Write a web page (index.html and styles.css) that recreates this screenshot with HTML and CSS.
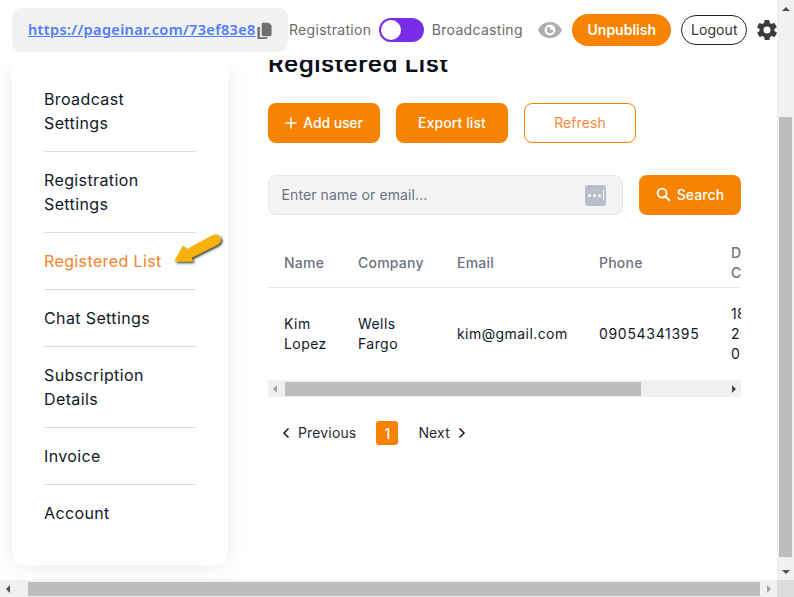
FILE: index.html
```html
<!DOCTYPE html>
<html lang="en">
<head>
<meta charset="utf-8">
<title>Registered List</title>
<link rel="stylesheet" href="styles.css">
</head>
<body>
<div class="window">
  <div class="page">
    <header class="topbar">
      <div class="urlbox">
        <a class="url" href="#">https://pageinar.com/73ef83e8</a>
        <svg class="copy" viewBox="0 0 24 24" width="17" height="17"><path d="M10 1h8l4 4v13a2 2 0 0 1-2 2h-10a2 2 0 0 1-2-2V3a2 2 0 0 1 2-2z" fill="#6f6f6f"/><path d="M2 7h3.500v14.500h10.500V24H2z" fill="#6f6f6f"/></svg>
      </div>
      <span class="modelabel">Registration</span>
      <span class="toggle"><span class="knob"></span></span>
      <span class="modelabel">Broadcasting</span>
      <svg class="eye" viewBox="0 0 24 24" width="26" height="26"><path fill-rule="evenodd" d="M12 4.500C7 4.500 2.700 7.600 1 12c1.700 4.400 6 7.500 11 7.500s9.300-3.100 11-7.500c-1.700-4.400-6-7.500-11-7.500zm0 12.500a5 5 0 1 1 0-10 5 5 0 0 1 0 10z" fill="#aeaeae"/><path fill-rule="evenodd" d="M12 9a3 3 0 1 0 3 3h-2.500a.5.5 0 0 1-.5-.5z" fill="#aeaeae"/></svg>
      <button class="pill">Unpublish</button>
      <button class="logout">Logout</button>
      <svg class="gear" viewBox="0 0 24 24" width="24" height="24"><path fill-rule="evenodd" d="M19.400 13a7.500 7.500 0 0 0 0-2l2.100-1.600a.5.5 0 0 0 .1-.6l-2-3.500a.5.5 0 0 0-.6-.2l-2.500 1a7.500 7.500 0 0 0-1.700-1l-.4-2.700a.5.5 0 0 0-.5-.4h-4a.5.5 0 0 0-.5.400l-.4 2.700a7.500 7.500 0 0 0-1.700 1l-2.500-1a.5.5 0 0 0-.6.2l-2 3.500a.5.5 0 0 0 .1.6L4.600 11a7.500 7.500 0 0 0 0 2l-2.100 1.600a.5.5 0 0 0-.1.6l2 3.500a.5.5 0 0 0 .6.2l2.500-1a7.500 7.500 0 0 0 1.700 1l.4 2.700a.5.5 0 0 0 .5.4h4a.5.5 0 0 0 .5-.4l.4-2.700a7.500 7.500 0 0 0 1.700-1l2.500 1a.5.5 0 0 0 .6-.2l2-3.500a.5.5 0 0 0-.1-.6zM12 15.500a3.500 3.500 0 1 1 0-7 3.500 3.500 0 0 1 0 7z" fill="#3c3c3c"/></svg>
    </header>
    <div class="body">
      <aside class="sidebar">
        <nav class="menu">
          <a class="item">Broadcast<br>Settings</a>
          <a class="item">Registration<br>Settings</a>
          <a class="item active">Registered List</a>
          <a class="item">Chat Settings</a>
          <a class="item">Subscription<br>Details</a>
          <a class="item">Invoice</a>
          <a class="item">Account</a>
        </nav>
        <svg class="arrow" viewBox="0 0 56 40" width="56" height="40"><defs><filter id="s" x="-20%" y="-20%" width="150%" height="150%"><feDropShadow dx="1.500" dy="1.500" stdDeviation="1" flood-color="#000" flood-opacity=".8"/></filter></defs><path d="M5 29 L13 14 L16 18 L43.500 3.200 Q47 2 49.500 4.600 Q52 9.500 48 12 L21 25.500 L22.500 29 Z" fill="#f9b208" stroke="#f9b208" stroke-width="1" stroke-linejoin="round" filter="url(#s)"/></svg>
      </aside>
      <main class="main">
        <h1 class="title">Registered List</h1>
        <div class="actions">
          <button class="btn solid add"><svg viewBox="0 0 12 12" width="12" height="12"><path d="M6 .5v11M.5 6h11" stroke="#fff" stroke-width="1.500" fill="none"/></svg>Add user</button>
          <button class="btn solid">Export list</button>
          <button class="btn outline">Refresh</button>
        </div>
        <div class="searchrow">
          <div class="field">
            <span class="placeholder">Enter name or email...</span>
            <span class="dots"><i></i><i></i><i></i><b></b></span>
          </div>
          <button class="btn solid search"><svg viewBox="0 0 16 16" width="15" height="15"><circle cx="6.500" cy="6.500" r="4.800" stroke="#fff" stroke-width="2" fill="none"/><path d="M10 10l4.800 4.800" stroke="#fff" stroke-width="2.200" fill="none"/></svg>Search</button>
        </div>
        <div class="tablewrap">
          <div class="tableclip">
            <table class="table">
              <thead>
                <tr><th class="c1">Name</th><th class="c2">Company</th><th class="c3">Email</th><th class="c4">Phone</th><th class="c5">Date<br>Created</th></tr>
              </thead>
              <tbody>
                <tr><td>Kim<br>Lopez</td><td>Wells<br>Fargo</td><td>kim@gmail.com</td><td class="phone">09054341395</td><td>18<br>20<br>01</td></tr>
              </tbody>
            </table>
          </div>
          <div class="hbar inner">
            <span class="tri left dim"></span>
            <span class="thumb"></span>
            <span class="tri right"></span>
          </div>
        </div>
        <div class="pager">
          <svg viewBox="0 0 8 12" width="8" height="12"><path d="M6.500 1.500 2 6l4.500 4.500" stroke="#111827" stroke-width="1.500" fill="none"/></svg>
          <span class="prev">Previous</span>
          <span class="page1">1</span>
          <span class="next">Next</span>
          <svg viewBox="0 0 8 12" width="8" height="12"><path d="M1.500 1.500 6 6l-4.500 4.500" stroke="#111827" stroke-width="1.500" fill="none"/></svg>
        </div>
      </main>
    </div>
  </div>
  <div class="vbar">
    <span class="tri up"></span>
    <span class="vtrack"><span class="vthumb"></span></span>
    <span class="tri down"></span>
  </div>
  <div class="hbar outer">
    <span class="tri left"></span>
    <span class="othumb"></span>
    <span class="tri right dim"></span>
  </div>
  <div class="corner"></div>
</div>
</body>
</html>
```
FILE: styles.css
```css
* { box-sizing: border-box; }
html, body { margin: 0; padding: 0; height: 100%; overflow: hidden; background: #fff; }
body { font-family: Inter, "Liberation Sans", sans-serif; color: #111827; }
button { font-family: inherit; border: 0; padding: 0; cursor: pointer; }

.window { display: grid; grid-template-columns: 777px 17px; grid-template-rows: 580px 17px; width: 794px; height: 597px; }
.page { display: flex; flex-direction: column; overflow: hidden; min-width: 0; }

.topbar { flex: none; height: 60px; background: #fff; display: flex; align-items: center; position: relative; z-index: 2; padding-left: 12px; }
.urlbox { flex: none; width: 276px; height: 44px; background: #f1f1f1; border-radius: 9px; display: flex; align-items: center; padding-left: 16px; }
.url { color: #4f7cf7; font-family: "Noto Sans", sans-serif; font-size: 14.500px; font-weight: 600; text-decoration: underline; letter-spacing: .35px; white-space: nowrap; flex: none; padding-bottom: 2px; }
.copy { flex: none; margin-left: 0; }
.modelabel { font-size: 14px; color: #6b6b6b; letter-spacing: .3px; padding-bottom: 2px; }
.urlbox + .modelabel { margin-left: 1px; }
.toggle { width: 45px; height: 24px; border-radius: 12px; background: #7a2de8; margin: 0 8px 0 7.500px; display: flex; align-items: center; padding-left: 2px; flex: none; }
.knob { width: 20px; height: 20px; background: #fff; border-radius: 50%; }
.eye { margin-left: 14.500px; flex: none; }
.pill { margin-left: 9px; width: 99px; height: 32px; border-radius: 16px; background: #f78300; color: #fff; font-weight: 600; font-size: 14px; flex: none; padding-bottom: 1px; }
.logout { margin-left: 10px; width: 66px; height: 30px; border-radius: 15px; background: #fff; border: 1px solid #222; color: #333; font-size: 14px; letter-spacing: .1px; flex: none; padding-bottom: 1px; }
.gear { margin-left: 8px; flex: none; }

.body { flex: 1; display: flex; min-height: 0; overflow: hidden; padding-left: 12px; padding-bottom: 15px; }
.sidebar { flex: none; width: 216px; background: #fff; border-radius: 0 0 12px 12px; box-shadow: 0 4px 24px rgba(0,0,0,.07); padding: 0 32px; position: relative; }
.menu { display: flex; flex-direction: column; padding-top: 27px; }
.item { display: block; padding: 0 0 16px; margin-bottom: 16px; border-bottom: 1px solid #dcdcdc; font-size: 16px; line-height: 24px; color: #111827; letter-spacing: .38px; }
.item:last-child { border-bottom: 0; }
.active { color: #f97f2a; }
.arrow { position: absolute; left: 158px; top: 172px; }

.main { flex: none; width: 473px; margin-left: 40px; }
.title { margin: -9px 0 0; font-size: 24px; line-height: 26px; font-weight: 600; color: #0b0f1a; letter-spacing: .55px; }
.actions { display: flex; gap: 16px; margin-top: 26px; }
.btn { height: 40px; width: 112px; border-radius: 8px; font-size: 14px; font-weight: 500; letter-spacing: .1px; display: inline-flex; align-items: center; justify-content: center; gap: 6px; padding-bottom: 1px; }
.solid { background: #f78300; color: #fff; }
.add { letter-spacing: -.12px; }
.outline { background: #fff; border: 1px solid #f78300; color: #f98a3c; font-weight: 400; }
.searchrow { display: flex; gap: 16px; margin-top: 32px; }
.field { width: 355px; height: 40px; background: #f3f4f6; border: 1px solid #e5e7eb; border-radius: 8px; display: flex; align-items: center; justify-content: space-between; padding: 0 16px 0 12.500px; }
.placeholder { font-size: 14px; color: #6b7280; letter-spacing: .1px; padding-bottom: 1px; }
.dots { width: 21px; height: 21px; background: #b8bfca; border-radius: 3px; display: flex; align-items: center; justify-content: center; gap: 2px; }
.dots i { width: 3px; height: 3px; background: #fff; border-radius: 50%; }
.dots b { width: 1px; height: 10px; background: #fff; }
.search { width: 102px; }

.tablewrap { margin-top: 16px; }
.tableclip { overflow: hidden; }
.table { border-collapse: collapse; width: 561px; font-size: 14px; table-layout: fixed; }
.table th { height: 56px; text-align: left; font-weight: 500; color: #6b7280; line-height: 20px; padding: 8px 16px 0; letter-spacing: .22px; border-bottom: 1px solid #e5e7eb; }
.table td { height: 92px; padding: 2px 16px 0; line-height: 20px; color: #111827; letter-spacing: .43px; }
.table .phone { letter-spacing: .68px; }
.c1 { width: 74px; } .c2 { width: 99px; } .c3 { width: 142px; } .c4 { width: 132px; } .c5 { width: 114px; }
.hbar { display: flex; align-items: center; background: #f0f0f0; }
.hbar.inner { height: 17px; margin-top: 1px; padding: 0 5px; }
.thumb { height: 14px; width: 356px; margin-left: 8px; background: #bdbdbd; }
.inner .right { margin-left: auto; }
.tri { display: block; width: 0; height: 0; border-style: solid; border-color: transparent; flex: none; }
.left { border-width: 4px 4px 4px 0; border-right-color: #4d4d4d; }
.right { border-width: 4px 0 4px 4px; border-left-color: #4d4d4d; }
.left.dim { border-right-color: #a3a3a3; }
.right.dim { border-left-color: #a3a3a3; }
.up { border-width: 0 4px 4px; border-bottom-color: #4d4d4d; }
.down { border-width: 4px 4px 0; border-top-color: #4d4d4d; }

.pager { display: flex; align-items: center; margin-top: 24px; height: 24px; font-size: 14px; color: #1f2937; padding-left: 14px; letter-spacing: .15px; }
.prev { margin-left: 8px; padding-bottom: 1px; }
.page1 { width: 22px; height: 24px; background: #f78300; color: #fff; border-radius: 3px; display: flex; align-items: center; justify-content: center; font-weight: 500; margin: 0 20px; }
.next { margin-right: 8px; padding-bottom: 1px; }

.vbar { grid-column: 2; grid-row: 1; background: #f0f0f0; display: flex; flex-direction: column; align-items: center; padding: 7px 0 6px; }
.vtrack { flex: 1; width: 100%; padding: 106px 2px 13px; display: flex; flex-direction: column; }
.vthumb { flex: 1; background: #bdbdbd; }
.hbar.outer { grid-column: 1; grid-row: 2; padding: 0 6px; }
.othumb { flex: 1; height: 14px; margin: 0 7px 0 18px; background: #bdbdbd; }
.corner { grid-column: 2; grid-row: 2; background: #dcdcdc; }
```
